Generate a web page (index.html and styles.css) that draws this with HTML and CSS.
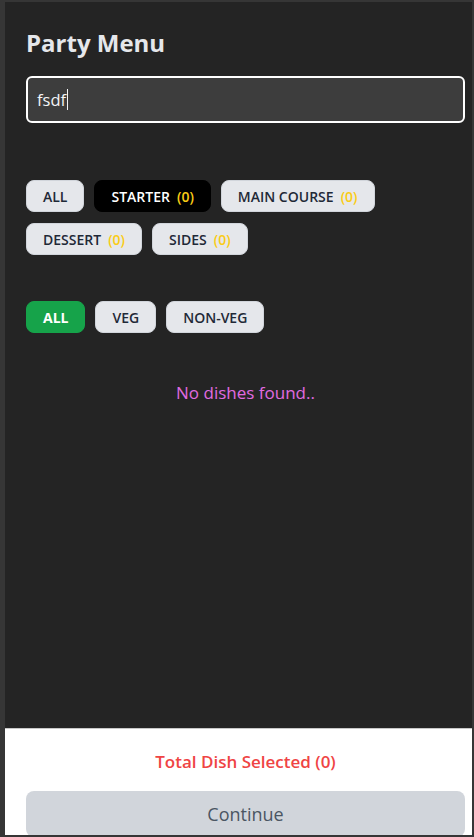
FILE: index.html
```html
<!DOCTYPE html>
<html lang="en">
<head>
<meta charset="utf-8">
<title>Party Menu</title>
<link rel="stylesheet" href="styles.css">
</head>
<body>
<div class="frame">
  <main class="main">
    <h1 class="title">Party Menu</h1>
    <div class="search"><span class="search-text">fsdf</span><span class="caret"></span></div>
    <div class="cats">
      <button class="pill">ALL</button>
      <button class="pill pill-dark">STARTER <span class="count">(0)</span></button>
      <button class="pill">MAIN COURSE <span class="count">(0)</span></button>
      <button class="pill">DESSERT <span class="count">(0)</span></button>
      <button class="pill">SIDES <span class="count">(0)</span></button>
    </div>
    <div class="diet">
      <button class="pill pill-green">ALL</button>
      <button class="pill">VEG</button>
      <button class="pill">NON-VEG</button>
    </div>
    <p class="empty">No dishes found..</p>
  </main>
  <footer class="footer">
    <p class="total">Total Dish Selected (0)</p>
    <button class="continue">Continue</button>
  </footer>
</div>
</body>
</html>
```
FILE: styles.css
```css
* { box-sizing: border-box; }
html, body { margin: 0; padding: 0; background: #333333; }
body { font-family: "Open Sans", "Noto Sans", sans-serif; }
.frame {
  height: 837px;
  border-style: solid;
  border-color: #363636;
  border-width: 2px 2px 2px 5px;
  background: #242424;
  display: flex;
  flex-direction: column;
  overflow: hidden;
}
.main {
  flex: 1;
  padding: 25px 7px 0 21px;
}
.title {
  margin: 0 0 17px;
  font-size: 24px;
  line-height: 32px;
  font-weight: 700;
  color: #e5e7eb;
}
.search {
  height: 47px;
  border: 2px solid #ffffff;
  border-radius: 6px;
  background: #3d3d3d;
  display: flex;
  align-items: center;
  padding: 0 9px;
}
.search-text { color: #f3f4f6; font-size: 16.5px; }
.caret { width: 1px; height: 21px; background: #f3f4f6; margin-left: 1px; }
.cats {
  margin-top: 57px;
  display: flex;
  flex-wrap: wrap;
  gap: 11px 10px;
  width: 400px;
}
.pill {
  height: 32px;
  padding: 0 16px;
  border: 1px solid #d1d5db;
  border-radius: 8px;
  background: #e5e7eb;
  color: #1f2937;
  font-family: inherit;
  font-size: 14px;
  font-weight: 600;
  display: inline-flex;
  align-items: center;
  gap: 7px;
}
.count { color: #facc15; }
.pill-dark { background: #000000; border-color: #000000; color: #ffffff; }
.pill-green { background: #16a34a; border-color: #16a34a; color: #ffffff; font-weight: 700; }
.diet {
  margin-top: 46px;
  display: flex;
  gap: 10px;
}
.empty {
  margin: 48px 0 0;
  text-align: center;
  font-size: 17px;
  color: #e06be0;
}
.footer {
  height: 107px;
  background: #ffffff;
  border-top: 1px solid #c8c8c8;
  padding: 20px 7px 0 21px;
  text-align: center;
}
.total {
  margin: 0 0 16px;
  font-size: 17px;
  font-weight: 600;
  line-height: 26px;
  color: #ef4444;
}
.continue {
  width: 100%;
  height: 46px;
  border: none;
  border-radius: 8px;
  background: #d1d5db;
  color: #4b5563;
  font-family: inherit;
  font-size: 18px;
  font-weight: 500;
}
```
